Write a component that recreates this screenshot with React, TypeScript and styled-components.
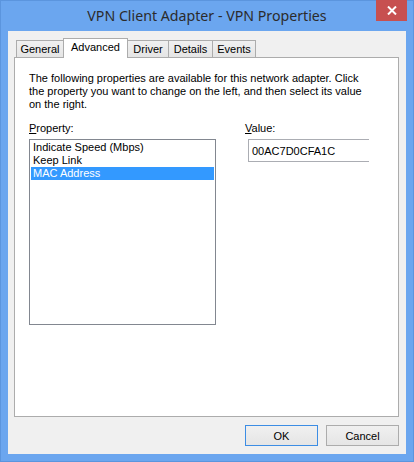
import React from "react";
import styled, { createGlobalStyle } from "styled-components";

const Global = createGlobalStyle`
  html, body { margin: 0; padding: 0; background: #ffffff; }
  * { box-sizing: border-box; }
`;

const Window = styled.div`
  width: 414px;
  height: 462px;
  background: #6ba6ef;
  border: 1px solid #5b95de;
  display: flex;
  flex-direction: column;
  padding: 0 7px 7px 7px;
  font-family: "Liberation Sans", Arial, sans-serif;
  font-size: 11px;
  color: #000;
`;

const TitleBar = styled.div`
  height: 30px;
  display: grid;
  grid-template-columns: 1fr auto 1fr;
  align-items: start;
  margin: 0 -7px;
`;

const Title = styled.div`
  grid-column: 2;
  font-family: "Noto Sans", "Segoe UI", sans-serif;
  font-size: 14.2px;
  line-height: 20px;
  padding-top: 5px;
  color: #2b2b2b;
  white-space: nowrap;
`;

const CloseButton = styled.div`
  grid-column: 3;
  justify-self: end;
  margin-right: 6px;
  margin-top: -1px;
  width: 31px;
  height: 21px;
  background: #c75050;
  display: flex;
  align-items: center;
  justify-content: center;
`;

const Client = styled.div`
  flex: 1;
  background: #f0f0f0;
  display: flex;
  flex-direction: column;
  padding: 7px 7px 8px 6px;
`;

const TabStrip = styled.div`
  display: flex;
  align-items: flex-end;
  height: 19px;
  padding-left: 2px;
  position: relative;
  z-index: 1;
`;

const Tab = styled.div<{ $w: number; $active?: boolean }>`
  width: ${(p) => p.$w}px;
  height: ${(p) => (p.$active ? 20 : 17)}px;
  margin-bottom: ${(p) => (p.$active ? -1 : 0)}px;
  margin-left: -1px;
  &:first-child { margin-left: 0; }
  border: 1px solid #acacac;
  border-bottom: none;
  background: ${(p) =>
    p.$active ? "#ffffff" : "linear-gradient(#f0f0f0, #e5e5e5)"};
  position: relative;
  z-index: ${(p) => (p.$active ? 2 : 0)};
  display: flex;
  justify-content: center;
  padding-top: 2px;
  line-height: 13px;
  white-space: nowrap;
`;

const Panel = styled.div`
  height: 360px;
  background: #ffffff;
  border: 1px solid #acacac;
  padding: 14px 14px 0 14px;
  display: flex;
  flex-direction: column;
`;

const Description = styled.p`
  margin: 0;
  line-height: 13px;
  width: 340px;
`;

const Fields = styled.div`
  margin-top: 11px;
  display: grid;
  grid-template-columns: 187px 1fr;
  column-gap: 29px;
  row-gap: 4px;
  align-items: start;
`;

const Label = styled.div`
  line-height: 13px;
`;

const ListBox = styled.div`
  height: 186px;
  border: 1px solid #828790;
  padding: 1px;
  background: #fff;
  display: flex;
  flex-direction: column;
`;

const ListItem = styled.div<{ $selected?: boolean }>`
  height: 13px;
  line-height: 13px;
  padding-left: 2px;
  background: ${(p) => (p.$selected ? "#3399ff" : "transparent")};
  color: ${(p) => (p.$selected ? "#ffffff" : "#000000")};
`;

const ValueBox = styled.div`
  margin-left: 3px;
  width: 121px;
  height: 23px;
  border: 1px solid #abadb3;
  border-right: none;
  padding-left: 3px;
  display: flex;
  align-items: center;
`;

const ButtonRow = styled.div`
  margin-top: 8px;
  display: flex;
  justify-content: flex-end;
  gap: 8px;
`;

const Button = styled.div<{ $default?: boolean }>`
  width: 73px;
  height: 21px;
  border: 1px solid ${(p) => (p.$default ? "#3c8de4" : "#acacac")};
  background: linear-gradient(#f0f0f0, #e5e5e5);
  display: flex;
  align-items: center;
  justify-content: center;
`;

const tabs = [
  { label: "General", w: 48 },
  { label: "Advanced", w: 65, active: true },
  { label: "Driver", w: 42 },
  { label: "Details", w: 45 },
  { label: "Events", w: 44 },
];

export default function App() {
  return (
    <>
      <Global />
      <Window>
        <TitleBar>
          <Title>VPN Client Adapter - VPN Properties</Title>
          <CloseButton>
            <svg width="10" height="9" viewBox="0 0 10 9">
              <path d="M1 0.5 L9 8.5 M9 0.5 L1 8.5" stroke="#ffffff" strokeWidth="2" />
            </svg>
          </CloseButton>
        </TitleBar>
        <Client>
          <TabStrip>
            {tabs.map((t) => (
              <Tab key={t.label} $w={t.w} $active={t.active}>
                {t.label}
              </Tab>
            ))}
          </TabStrip>
          <Panel>
            <Description>
              The following properties are available for this network adapter. Click
              the property you want to change on the left, and then select its value
              on the right.
            </Description>
            <Fields>
              <Label>
                <u>P</u>roperty:
              </Label>
              <Label>
                <u>V</u>alue:
              </Label>
              <ListBox>
                <ListItem>Indicate Speed (Mbps)</ListItem>
                <ListItem>Keep Link</ListItem>
                <ListItem $selected>MAC Address</ListItem>
              </ListBox>
              <ValueBox>00AC7D0CFA1C</ValueBox>
            </Fields>
          </Panel>
          <ButtonRow>
            <Button $default>OK</Button>
            <Button>Cancel</Button>
          </ButtonRow>
        </Client>
      </Window>
    </>
  );
}
